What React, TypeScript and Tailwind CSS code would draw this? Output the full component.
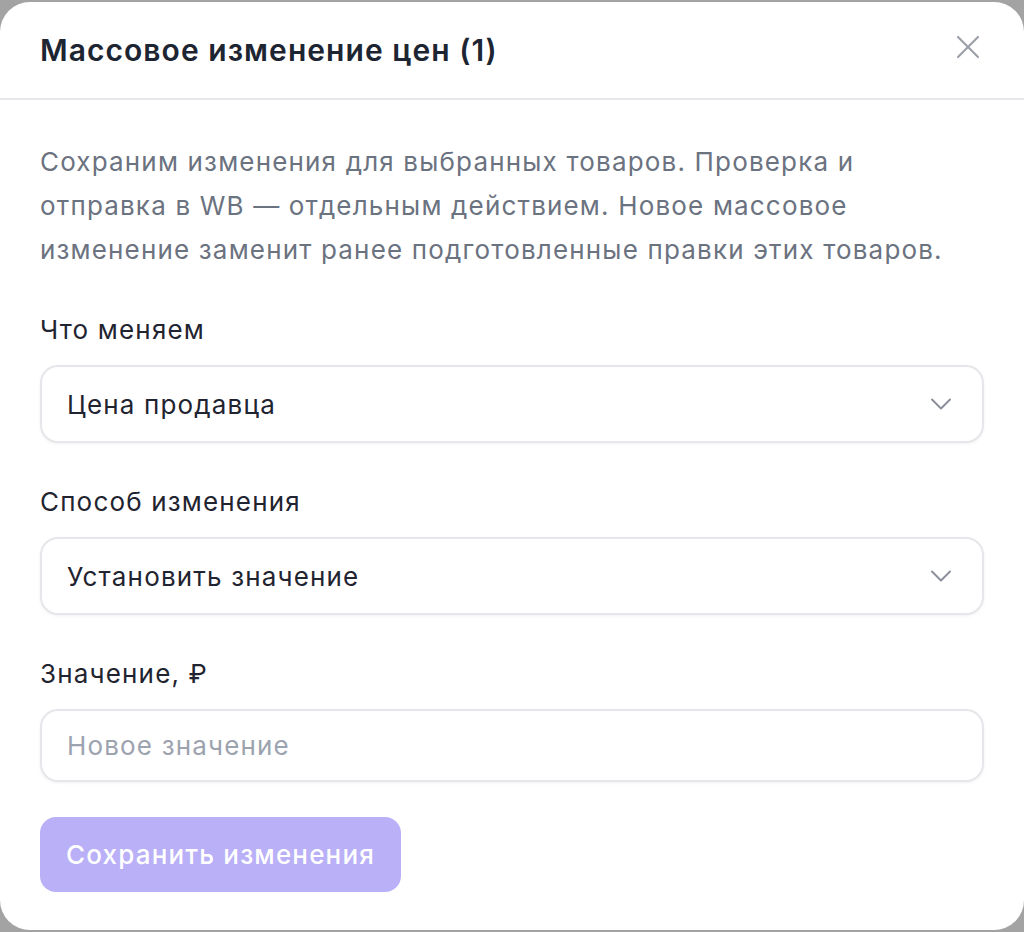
import React from "react";
import { X, ChevronDown } from "lucide-react";

const Field = ({ label, children }: { label: string; children: React.ReactNode }) => {
  return (
    <div className="flex flex-col gap-[17px]">
      <label className="text-[26px] leading-[36px] tracking-[0.045em] text-[#1f2430]">{label}</label>
      {children}
    </div>
  );
};

const Select = ({ value }: { value: string }) => {
  return (
    <div className="flex h-[78px] items-center justify-between rounded-[18px] border-2 border-[#e6e7ea] bg-white pl-[25px] pr-[23px] shadow-[0_1px_3px_rgba(0,0,0,0.06)]">
      <span className="text-[26px] tracking-[0.045em] text-[#1f2430]">{value}</span>
      <ChevronDown className="h-[36px] w-[36px] text-[#8b8f9b]" strokeWidth={1.3} />
    </div>
  );
};

export default function App() {
  return (
    <div
      className="h-[932px] w-[1024px] bg-[#a3a3a3] pt-[2px]"
      style={{ fontFamily: "Inter, 'Noto Sans', sans-serif" }}
    >
      <div className="flex h-[928px] flex-col rounded-[30px] bg-white">
        <div className="flex h-[98px] items-center justify-between border-b-2 border-[#e6e7ea] pl-[40px] pr-[36px]">
          <h2 className="text-[30px] font-semibold tracking-[0.035em] text-[#1e2532]">
            Массовое изменение цен (1)
          </h2>
          <X className="mb-[6px] h-[40px] w-[40px] text-[#9ca0aa]" strokeWidth={1.3} />
        </div>
        <div className="flex flex-col gap-[40px] px-[40px] pt-[40px]">
          <p className="text-[26px] leading-[44px] tracking-[0.045em] text-[#6b7280]">
            Сохраним изменения для выбранных товаров. Проверка и отправка в WB — отдельным действием.
            Новое массовое изменение заменит ранее подготовленные правки этих товаров.
          </p>
          <div className="flex flex-col gap-[41px]">
            <Field label="Что меняем">
              <Select value="Цена продавца" />
            </Field>
            <Field label="Способ изменения">
              <Select value="Установить значение" />
            </Field>
            <Field label="Значение, ₽">
              <input
                placeholder="Новое значение"
                className="h-[73px] rounded-[18px] border-2 border-[#e6e7ea] bg-white px-[25px] text-[26px] tracking-[0.045em] text-[#1f2430] shadow-[0_1px_3px_rgba(0,0,0,0.06)] outline-none placeholder:text-[#9ca3af]"
              />
            </Field>
          </div>
          <div className="-mt-[5px]">
            <button className="h-[75px] rounded-[16px] bg-[#b9b0f7] px-[26px] text-[26px] font-medium tracking-[0.045em] text-white">
              Сохранить изменения
            </button>
          </div>
        </div>
      </div>
    </div>
  );
}
